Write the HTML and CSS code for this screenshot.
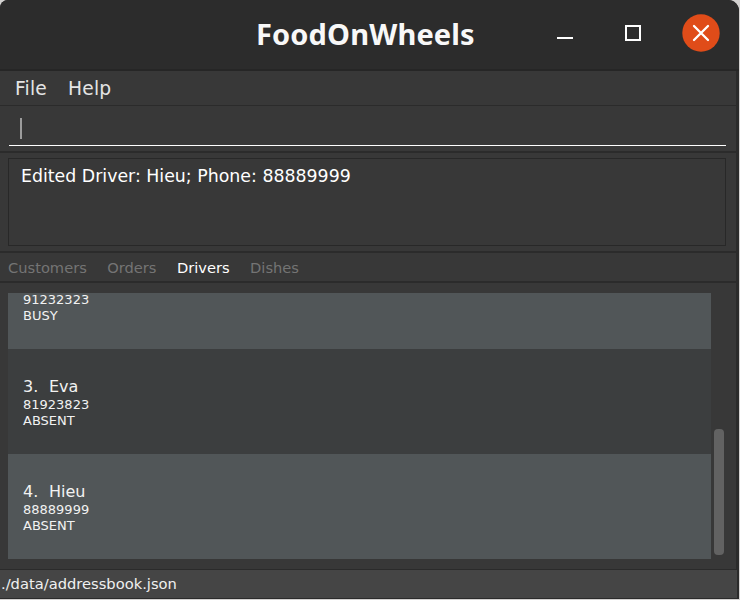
FILE: index.html
```html
<!DOCTYPE html>
<html lang="en">
<head>
<meta charset="utf-8">
<title>FoodOnWheels</title>
<link rel="stylesheet" href="styles.css">
</head>
<body>
<div class="window">
  <header class="titlebar">
    <h1 class="title">FoodOnWheels</h1>
    <div class="controls">
      <svg class="minimize" width="16" height="16" viewBox="0 0 16 16"><path d="M0 13H16" stroke="#fff" stroke-width="2"/></svg>
      <svg class="maximize" width="16" height="16" viewBox="0 0 16 16"><rect x="1" y="1" width="14" height="14" fill="none" stroke="#fff" stroke-width="2"/></svg>
      <svg class="close" width="38" height="38" viewBox="0 0 38 38"><circle cx="19" cy="19" r="18.7" fill="#e04c19"/><path d="M12 12L26 26M26 12L12 26" stroke="#fff" stroke-width="2.3" stroke-linecap="round"/></svg>
    </div>
  </header>
  <div class="content">
    <nav class="menu"><span>File</span><span>Help</span></nav>
    <div class="command"><div class="field"><i class="caret"></i></div></div>
    <div class="result-pane"><div class="result">Edited Driver: Hieu; Phone: 88889999</div></div>
    <nav class="tabs"><span>Customers</span><span>Orders</span><span class="active">Drivers</span><span>Dishes</span></nav>
    <main class="list-pane">
      <div class="list">
        <div class="card alt partial"><p>91232323</p><p>BUSY</p></div>
        <div class="card"><h2><span class="num">3.</span>Eva</h2><p>81923823</p><p>ABSENT</p></div>
        <div class="card alt"><h2><span class="num">4.</span>Hieu</h2><p>88889999</p><p>ABSENT</p></div>
      </div>
      <div class="track"><div class="thumb"></div></div>
    </main>
    <footer class="status">./data/addressbook.json</footer>
  </div>
</div>
</body>
</html>
```
FILE: styles.css
```css
* { box-sizing: border-box; }
body { margin: 0; background: #d4d2d1; font-family: "DejaVu Sans", sans-serif; overflow: hidden; }
.window { width: 739px; height: 599px; background: #2b2b2b; border-radius: 8px 11px 0 0; display: flex; flex-direction: column; padding-bottom: 2px; }
.titlebar { height: 71px; flex: none; border-bottom: 2px solid #262626; background: #2c2c2c; border-radius: 8px 11px 0 0; display: flex; justify-content: space-between; align-items: flex-start; }
.title { margin: 14px 0 0 256px; font: 700 29px/40px "Noto Sans", sans-serif; letter-spacing: 0.15px; color: #f8f8f8; white-space: nowrap; }
.controls { display: flex; padding: 14px 19px 0 0; }
.minimize { margin: 11px 52px 0 0; }
.maximize { margin: 11px 41px 0 0; }
.content { flex: 1; min-height: 0; width: 736px; background: #383838; display: flex; flex-direction: column; }
.menu { height: 35px; flex: none; border-bottom: 1px solid #2b2b2b; display: flex; gap: 21px; padding-left: 15px; font-size: 18.67px; letter-spacing: 0.2px; line-height: 35px; color: #e4e4e4; }
.command { height: 47px; flex: none; border-bottom: 2px solid #2b2b2b; padding: 0 10px 0 9px; }
.field { height: 40px; border-bottom: 1px solid #fff; padding: 12px 0 0 11px; }
.caret { display: block; width: 2px; height: 21px; background: #9c9c9c; }
.result-pane { height: 100px; flex: none; border-bottom: 2px solid #2b2b2b; padding: 5px 10px 0 8px; }
.result { height: 88px; border: 1px solid #282828; padding: 6px 12px; font-size: 17.36px; line-height: 22px; color: #fff; }
.tabs { height: 30px; flex: none; border-bottom: 2px solid #2b2b2b; display: flex; gap: 20.4px; padding-left: 8px; font-size: 14.67px; line-height: 29px; color: #747474; }
.tabs .active { color: #fff; }
.list-pane { height: 286px; flex: none; padding: 10px 0 0 8px; display: flex; }
.list { width: 703px; height: 266px; overflow: hidden; }
.card { height: 105px; padding: 27px 15px 0; background: #3c3e3f; color: #f2f2f2; }
.card.alt { background: #515658; }
.card.partial { height: 56px; padding-top: 0; display: flow-root; }
.card h2 { margin: 0; font-weight: 400; font-size: 16px; line-height: 21px; }
.num { display: inline-block; width: 26px; }
.card p { margin: 0; font-size: 13px; line-height: 16px; }
.card.partial p:first-child { margin-top: -1px; }
.track { margin-left: 3px; padding-top: 136px; }
.thumb { width: 10px; height: 126px; border-radius: 4px; background: #626262; }
.status { flex: 1; width: 737px; border-top: 1px solid #2b2b2b; background: #454545; padding-left: 1px; font-size: 14.7px; line-height: 28px; color: #f0f0f0; }
```
